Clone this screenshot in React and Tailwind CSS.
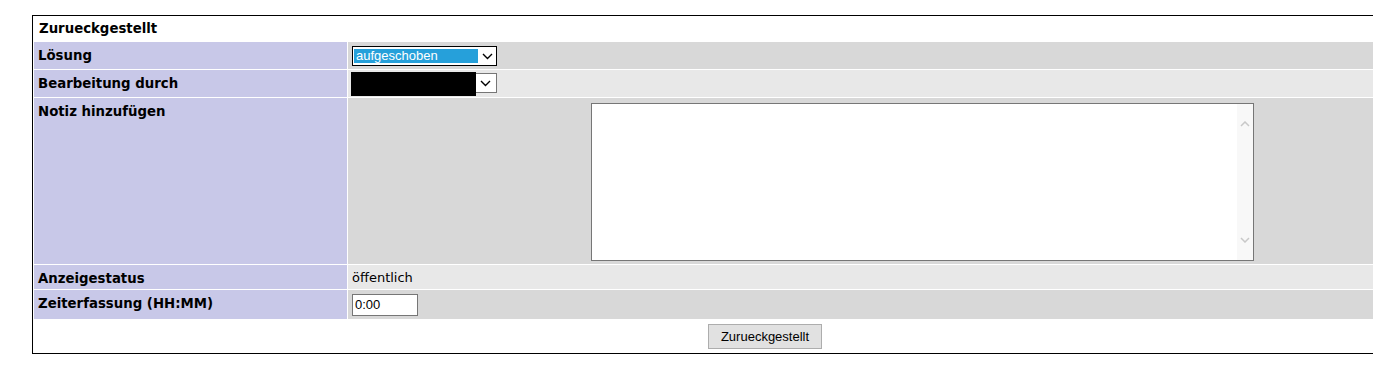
import React from "react";

const Chevron = ({ className = "" }) => (
  <svg width="11" height="7" viewBox="0 0 11 7" className={className}>
    <path d="M1 1 L5.5 5.5 L10 1" fill="none" stroke="#000" strokeWidth="1.4" />
  </svg>
);

const Label = ({ children, h }) => (
  <div className={`bg-[#c8c8e8] px-[4px] pt-[6px] font-bold text-[13.3px] leading-[16px] ${h}`}>{children}</div>
);

const App = () => {
  return (
    <div className="w-[1373px] h-[367px] overflow-hidden bg-white text-black" style={{ fontFamily: "'DejaVu Sans', Verdana, sans-serif" }}>
      <div className="ml-[32px] mt-[15px] w-[1466px] border border-black px-[1px]">
        <div className="grid grid-cols-[313px_1fr] gap-[1px]">
          {/* title */}
          <div className="col-span-2 h-[25px] px-[5px] pt-[5px] font-bold text-[13.3px] leading-[16px]">Zurueckgestellt</div>

          {/* Lösung */}
          <Label h="h-[27px]">Lösung</Label>
          <div className="bg-[#d8d8d8] h-[27px] pl-[4px] pt-[4px]">
            <div className="flex items-center w-[145px] h-[20px] border border-black bg-white pl-[1px]">
              <div className="w-[124px] h-[14px] bg-[#26a0da] text-white text-[13px] leading-[14px] pl-[2px]" style={{ fontFamily: "'Liberation Sans', Arial, sans-serif" }}>
                aufgeschoben
              </div>
              <Chevron className="ml-[4px]" />
            </div>
          </div>

          {/* Bearbeitung */}
          <Label h="h-[27px]">Bearbeitung durch</Label>
          <div className="bg-[#e8e8e8] h-[27px] pl-[3px] pt-[3px]">
            <div className="flex items-center w-[146px] h-[20px] border border-[#767676] bg-white">
              <div className="w-[125px] h-[24px] bg-black -ml-[1px] mt-[2px]" />
              <Chevron className="ml-[4px]" />
            </div>
          </div>

          {/* Notiz */}
          <Label h="h-[166px]">Notiz hinzufügen</Label>
          <div className="bg-[#d8d8d8] h-[166px] flex justify-center pt-[5px]">
            <div className="flex w-[663px] h-[158px] border border-[#767676] bg-white">
              <div className="flex-1" />
              <div className="w-[16px] bg-[#f8f8f8] flex flex-col items-center justify-between py-[17px]">
                <svg width="10" height="6" viewBox="0 0 10 6">
                  <path d="M1 5 L5 1 L9 5" fill="none" stroke="#c8c8c8" strokeWidth="1.5" />
                </svg>
                <svg width="10" height="6" viewBox="0 0 10 6">
                  <path d="M1 1 L5 5 L9 1" fill="none" stroke="#c8c8c8" strokeWidth="1.5" />
                </svg>
              </div>
            </div>
          </div>

          {/* Anzeigestatus */}
          <Label h="h-[24px]">Anzeigestatus</Label>
          <div className="bg-[#e8e8e8] h-[24px] pl-[4px] pt-[5px] text-[13px] leading-[16px]">öffentlich</div>

          {/* Zeiterfassung */}
          <Label h="h-[29px]">Zeiterfassung (HH:MM)</Label>
          <div className="bg-[#d8d8d8] h-[29px] pl-[4px] pt-[4px]">
            <div className="w-[66px] h-[22px] border border-[#767676] bg-white text-[13px] leading-[20px] pl-[2px]" style={{ fontFamily: "'Liberation Sans', Arial, sans-serif" }}>
              0:00
            </div>
          </div>

          {/* button */}
          <div className="col-span-2 h-[33px] flex justify-center pt-[4px]">
            <button className="h-[25px] w-[114px] bg-[#e1e1e1] border border-[#adadad] text-[13px] leading-[20px]" style={{ fontFamily: "'Liberation Sans', Arial, sans-serif" }}>
              Zurueckgestellt
            </button>
          </div>
        </div>
      </div>
    </div>
  );
};

export default App;
